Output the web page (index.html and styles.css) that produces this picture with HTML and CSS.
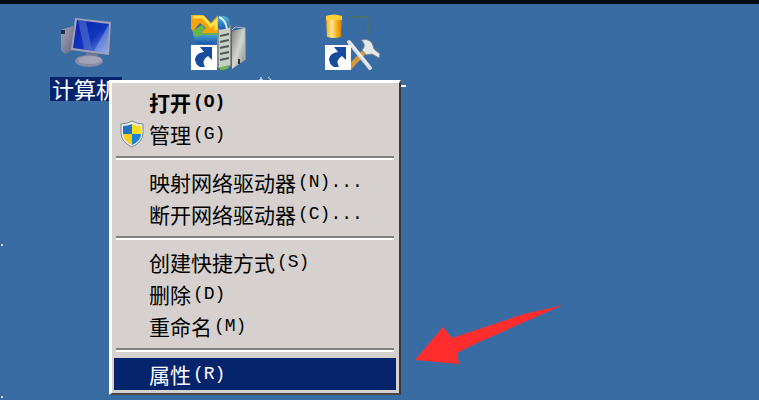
FILE: index.html
```
<!DOCTYPE html>
<html lang="zh-CN">
<head>
  <meta charset="UTF-8" />
  <meta name="viewport" content="width=device-width, initial-scale=1.0" />
  <title>桌面</title>
  <link rel="stylesheet" href="styles.css">
</head>
<body>
  <main class="desktop">
    <div class="icons">
      <div class="icon">
        <svg width="60" height="56" viewBox="0 0 60 56" aria-hidden="true">
          <defs>
            <linearGradient id="screen" x1="0" y1="0" x2="1" y2="1">
              <stop offset="0" stop-color="#0a1eb0" />
              <stop offset="0.55" stop-color="#1236bd" />
              <stop offset="1" stop-color="#7fa5e6" />
            </linearGradient>
            <linearGradient id="metal" x1="0" y1="0" x2="1" y2="1">
              <stop offset="0" stop-color="#a3a6bd" />
              <stop offset="1" stop-color="#68687f" />
            </linearGradient>
          </defs>
          <path d="M5 18 L17 14 V38 L9 42 L5 38Z" fill="url(#metal)" />
          <path d="M5 18h4v4H5z" fill="#252b43" />
          <path d="M30 40 L42 42 L41 50 L31 48Z" fill="#72768f" />
          <ellipse cx="33" cy="49" rx="14" ry="6" fill="#888ba3" />
          <ellipse cx="34" cy="48" rx="12" ry="4" fill="#a2a2b8" />
          <path d="M19 6 L55 10 L53 43 L15 38Z" fill="#a2a1b7" />
          <path d="M21 8 L53 12 L51 41 L17 36Z" fill="url(#screen)" />
          <path d="M22 8 L30 9 L36 38 L28 37Z" fill="#5e81d5" opacity="0.5" />
          <path d="M53 12 L51 41 L38 39Z" fill="#a9c1ea" opacity="0.4" />
        </svg>
        <span class="label selected">计算机</span>
      </div>
      <div class="icon">
        <svg width="60" height="60" viewBox="0 0 60 60" aria-hidden="true">
          <defs>
            <linearGradient id="tower" x1="0" y1="0" x2="1" y2="1">
              <stop offset="0" stop-color="#7f807d" />
              <stop offset="0.5" stop-color="#d4d4d0" />
              <stop offset="1" stop-color="#8c8d8b" />
            </linearGradient>
            <linearGradient id="globe" x1="0" y1="0" x2="0" y2="1">
              <stop offset="0" stop-color="#55b7dc" />
              <stop offset="1" stop-color="#1a55ac" />
            </linearGradient>
          </defs>
          <path d="M27 5 Q37 2 41 14 L41 54 L33 58 L27 55Z" fill="#85928b" />
          <circle cx="33" cy="11" r="7" fill="url(#globe)" />
          <path d="M29 5 Q36 8 37 17" fill="none" stroke="#d7edf4" stroke-width="2" />
          <path d="M29 18 L40 16 V53 L29 56Z" fill="#c9cfc7" />
          <path d="M30 24 L39 22 M30 30 L39 28 M30 36 L39 34 M30 42 L39 40 M30 48 L39 46" stroke="#4e5954" stroke-width="2" />
          <path d="M30 57 L38 55" stroke="#71b93e" stroke-width="3" />
          <path d="M42 19 L55 16 V48 L42 57Z" fill="url(#tower)" />
          <path d="M42 18 L45 15 L55 16 V48" fill="none" stroke="#b5b8b5" stroke-width="1" />
          <path d="M49 52 V47" stroke="#333" stroke-width="2" />
          <path d="M3 20 H27 V30 L22 32 H7 Q3 28 3 20Z" fill="url(#globe)" />
          <path d="M2 19 L12 13 L18 20 H27 V23 H12 L6 25Z" fill="#67b44c" />
          <path d="M1 3 H13 L21 11 L28 3 V21 H12 L16 16 L10 11 L3 19 L1 17Z" fill="#f5a20b" />
          <path d="M3 5 H13 L21 14 L26 9 V18" fill="none" stroke="#ffe045" stroke-width="3" />
          <path d="M1 33h26v25H1z" fill="#fff" />
          <path d="M10 35 H22 V48 L18 44 Q11 48 15 55 H10 Q5 52 5 47 Q6 41 14 40Z" fill="#164b9e" />
        </svg>
      </div>
      <div class="icon">
        <svg width="60" height="60" viewBox="0 0 60 60" aria-hidden="true">
          <defs>
            <linearGradient id="handle">
              <stop offset="0" stop-color="#f5a513" />
              <stop offset="0.35" stop-color="#ffe79a" />
              <stop offset="0.65" stop-color="#f8b51b" />
              <stop offset="1" stop-color="#d57606" />
            </linearGradient>
          </defs>
          <path d="M2 5 Q10 1 18 5 L17 25 Q10 27 3 25Z" fill="url(#handle)" />
          <path d="M2 4 Q10 1 18 4 V8 H2Z" fill="#ffcf35" />
          <path d="M26 5 H44 V23" fill="none" stroke="#58783c" stroke-width="1" />
          <path d="M25 56 L42 38" stroke="#d99735" stroke-width="5" />
          <path d="M25 30 L46 56" stroke="#dcdde5" stroke-width="4" stroke-linecap="round" />
          <path d="M26 30 L46 55" stroke="#fff" stroke-width="1" />
          <path d="M37 28 Q48 25 50 37 L56 42 L55 46 L48 42 L42 43 L38 38 Q43 33 37 28Z" fill="#e3e8eb" stroke="#7b858e" stroke-width="1" />
          <path d="M1 33h26v25H1z" fill="#fff" />
          <path d="M10 35 H22 V48 L18 44 Q11 48 15 55 H10 Q5 52 5 47 Q6 41 14 40Z" fill="#164b9e" />
        </svg>
      </div>
    </div>

    <!-- bits of the labels and windows behind the menu -->
    <svg class="specks" width="410" height="400" viewBox="0 0 410 400" aria-hidden="true">
      <path d="M261 77v4 M259 80h4 M268 77l3 3" stroke="#fff" stroke-width="1" />
      <path d="M401 86h5" stroke="#fff" stroke-width="2" />
      <circle cx="2" cy="245" r="1" fill="#fff" />
      <circle cx="2" cy="397" r="1" fill="#fff" />
    </svg>

    <div class="menu" role="menu">
      <button class="item default" role="menuitem">打开<span class="key">(O)</span></button>
      <button class="item" role="menuitem">
        <svg class="shield" width="24" height="28" viewBox="0 0 24 28" aria-hidden="true">
          <path d="M12 1 Q17 4 23 4 V13 Q23 22 12 27 Q1 22 1 13 V4 Q7 4 12 1Z" fill="#e9edf0" stroke="#7d8790" />
          <path d="M12 4 V14 H3 V6 Q8 6 12 4Z" fill="#1f72c4" />
          <path d="M12 4 Q16 6 21 6 V14 H12Z" fill="#f8dc24" />
          <path d="M3 14 H12 V25 Q3 21 3 14Z" fill="#f5cd1d" />
          <path d="M12 14 H21 Q21 21 12 25Z" fill="#1c82d4" />
        </svg>管理<span class="key">(G)</span></button>
      <hr class="line">
      <button class="item" role="menuitem">映射网络驱动器<span class="key">(N)...</span></button>
      <button class="item" role="menuitem">断开网络驱动器<span class="key">(C)...</span></button>
      <hr class="line">
      <button class="item" role="menuitem">创建快捷方式<span class="key">(S)</span></button>
      <button class="item" role="menuitem">删除<span class="key">(D)</span></button>
      <button class="item" role="menuitem">重命名<span class="key">(M)</span></button>
      <hr class="line">
      <button class="item active" role="menuitem">属性<span class="key">(R)</span></button>
    </div>

    <svg class="arrow" width="150" height="66" viewBox="0 0 150 66" aria-hidden="true">
      <path d="M1 60 L29 27 L38 38 L110 14 L149 5 L63 43 L43 53 L45 64Z" fill="#ff2d2e" />
    </svg>
  </main>
</body>
</html>
```

FILE: styles.css
```
body {
  margin: 0;
  background: #386ca3;
  font-family: "Noto Sans CJK SC", sans-serif;
}
.desktop {
  position: relative;
  box-sizing: border-box;
  min-height: 100vh;
  border-top: 4px solid #050b12;
  overflow: hidden;
}
.icons {
  display: flex;
  gap: 62px;
  padding: 8px 0 0 50px;
}
.icon {
  display: flex;
  flex-direction: column;
  align-items: center;
  width: 72px;
}
.icon svg {
  flex: none;
}
.label {
  margin-top: 9px;
  padding: 0 4px 2px 2px;
  color: #fff;
  font-size: 22px;
  line-height: 22px;
  white-space: nowrap;
}
.selected {
  background: #06246b;
}
.specks {
  position: absolute;
  top: -4px;
  left: 0;
}

/* context menu */
.menu {
  position: absolute;
  top: 76px;
  left: 109px;
  box-sizing: border-box;
  width: 292px;
  padding: 3px 3px 3px 2px;
  background: #d6d1ce;
  border: solid;
  border-width: 3px 2px 2px 3px;
  border-color: #fff #3d3a3b #4b4847 #fff;
}
.item {
  position: relative;
  display: flex;
  align-items: center;
  width: 100%;
  height: 32px;
  padding: 0 0 0 35px;
  border: none;
  background: none;
  color: #000;
  font: inherit;
  font-size: 21px;
  line-height: 32px;
  white-space: nowrap;
}
.key {
  margin-left: 2px;
  font-family: "Liberation Mono", monospace;
  font-size: 18px;
}
.default {
  font-weight: bold;
}
.active {
  background: #06246b;
  color: #fff;
}
.shield {
  position: absolute;
  left: 6px;
  top: 2px;
}
.line {
  height: 2px;
  margin: 6px 2px;
  border: none;
  border-top: 2px solid #83807e;
  background: #fff;
}
.arrow {
  position: absolute;
  top: 296px;
  left: 414px;
}
```
